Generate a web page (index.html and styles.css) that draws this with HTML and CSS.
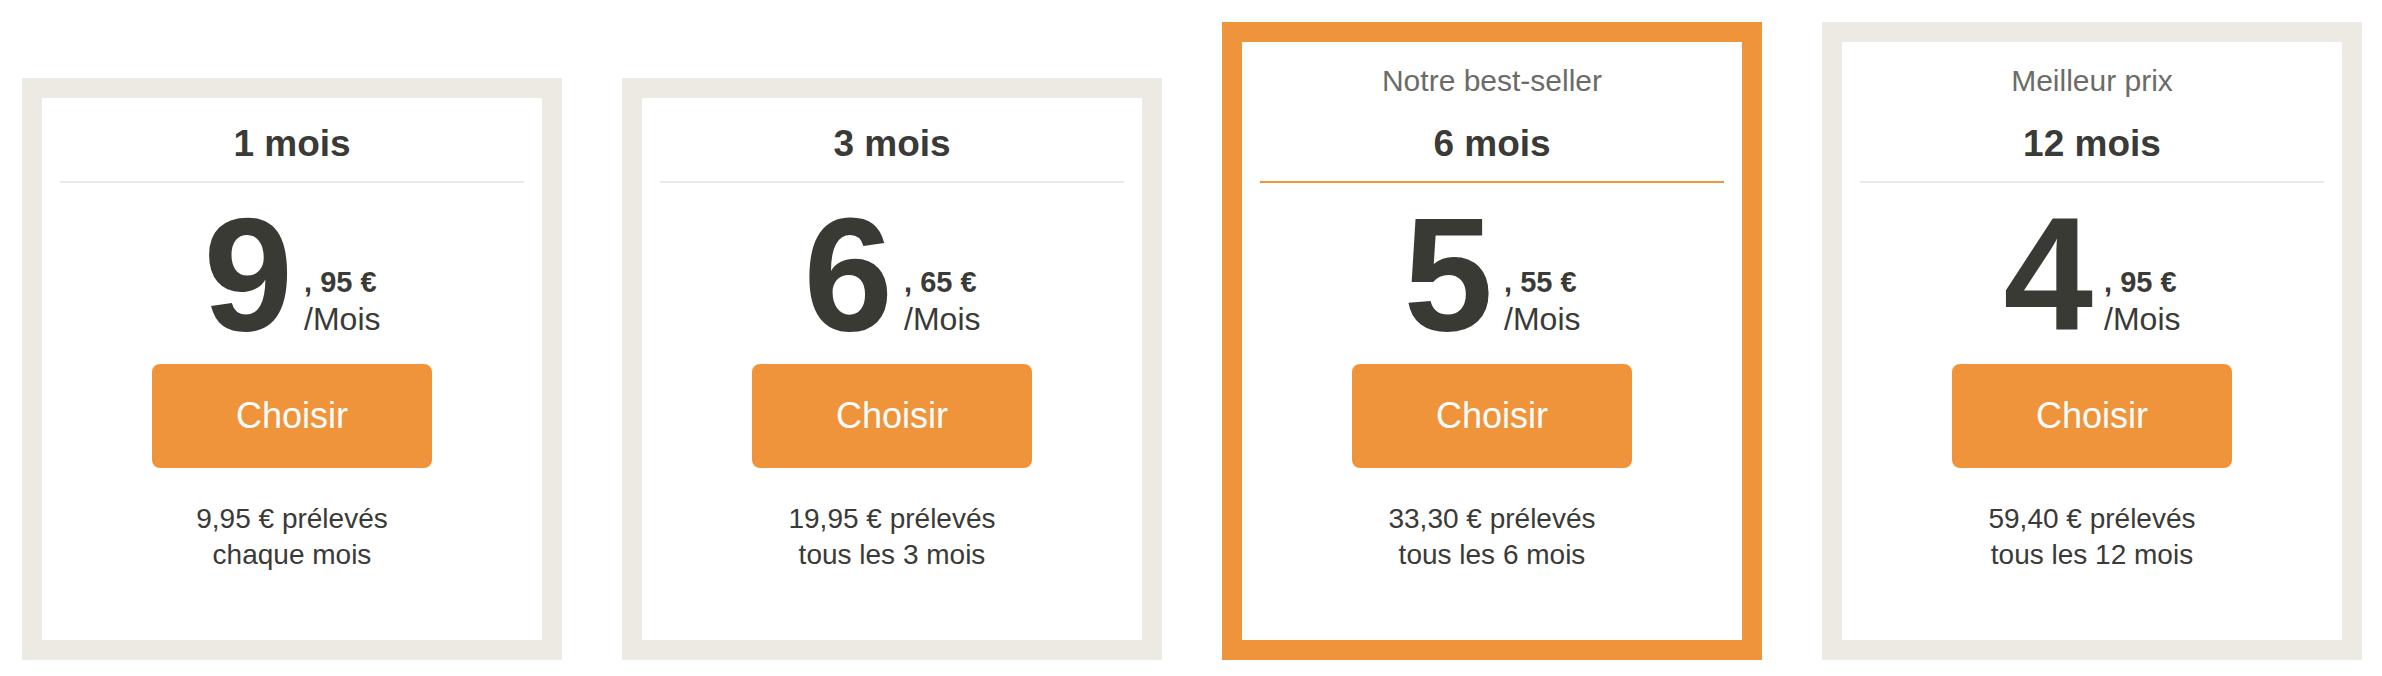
FILE: index.html
```html
<!DOCTYPE html>
<html lang="fr">
<head>
<meta charset="utf-8">
<title>Offres</title>
<link rel="stylesheet" href="styles.css">
</head>
<body>
<div class="plans">
  <div class="card">
    <div class="card-inner">
      <div class="title">1 mois</div>
      <div class="divider"></div>
      <div class="price">
        <span class="big">9</span>
        <span class="side"><span class="cents">, 95 €</span><span class="per">/Mois</span></span>
      </div>
      <a class="btn">Choisir</a>
      <p class="note">9,95 € prélevés<br>chaque mois</p>
    </div>
  </div>
  <div class="card">
    <div class="card-inner">
      <div class="title">3 mois</div>
      <div class="divider"></div>
      <div class="price">
        <span class="big">6</span>
        <span class="side"><span class="cents">, 65 €</span><span class="per">/Mois</span></span>
      </div>
      <a class="btn">Choisir</a>
      <p class="note">19,95 € prélevés<br>tous les 3 mois</p>
    </div>
  </div>
  <div class="card card-featured">
    <div class="card-inner">
      <div class="label">Notre best-seller</div>
      <div class="title">6 mois</div>
      <div class="divider"></div>
      <div class="price">
        <span class="big">5</span>
        <span class="side"><span class="cents">, 55 €</span><span class="per">/Mois</span></span>
      </div>
      <a class="btn">Choisir</a>
      <p class="note">33,30 € prélevés<br>tous les 6 mois</p>
    </div>
  </div>
  <div class="card">
    <div class="card-inner">
      <div class="label">Meilleur prix</div>
      <div class="title">12 mois</div>
      <div class="divider"></div>
      <div class="price">
        <span class="big">4</span>
        <span class="side"><span class="cents">, 95 €</span><span class="per">/Mois</span></span>
      </div>
      <a class="btn">Choisir</a>
      <p class="note">59,40 € prélevés<br>tous les 12 mois</p>
    </div>
  </div>
</div>
</body>
</html>
```

FILE: styles.css
```css
html, body {
  margin: 0;
  padding: 0;
  background: #ffffff;
}
body {
  font-family: "Liberation Sans", Arial, Helvetica, sans-serif;
  color: #3a3a36;
}
.plans {
  display: flex;
  align-items: flex-end;
  gap: 60px;
  padding: 22px 20px 16px 22px;
}
.card {
  width: 540px;
  box-sizing: border-box;
  border: 20px solid #edeae3;
  background: #ffffff;
}
.card-featured {
  border-color: #f0943c;
}
.card-inner {
  display: flex;
  flex-direction: column;
  align-items: center;
  padding: 24px 18px 67px;
}
.label {
  font-size: 30px;
  line-height: 30px;
  color: #6c6c66;
  margin-bottom: 26px;
}
.title {
  font-size: 37px;
  font-weight: bold;
  line-height: 44px;
  margin-bottom: 15px;
}
.divider {
  align-self: stretch;
  height: 2px;
  background: #edeae3;
}
.card-featured .divider {
  background: #f0943c;
}
.price {
  display: flex;
  align-items: flex-end;
  gap: 11px;
  margin-top: 31px;
}
.big {
  font-size: 161px;
  font-weight: bold;
  line-height: 120px;
  color: #3a3a35;
}
.side {
  display: flex;
  flex-direction: column;
}
.cents {
  font-size: 29px;
  font-weight: bold;
  line-height: 43px;
  white-space: nowrap;
}
.per {
  font-size: 32px;
  line-height: 30px;
}
.btn {
  display: flex;
  align-items: center;
  justify-content: center;
  width: 280px;
  height: 104px;
  margin-top: 30px;
  border-radius: 8px;
  background: #f0943c;
  color: #ffffff;
  font-size: 36px;
  cursor: pointer;
}
.note {
  margin: 33px 0 0;
  font-size: 28px;
  line-height: 36px;
  text-align: center;
}
```
